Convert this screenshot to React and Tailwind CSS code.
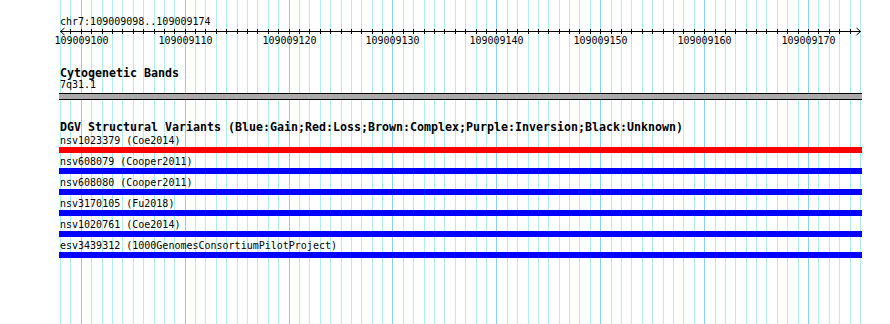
import React from 'react'

const START = 109009098
const END = 109009174
const BASES = END - START + 1
const SCALE = 800 / BASES
const xs = Array.from({ length: BASES + 1 }, (_, k) => Math.round(60 + k * SCALE))

const variants = [
  { id: 'nsv1023379', study: 'Coe2014', color: 'bg-[#ff0000]' },
  { id: 'nsv608079', study: 'Cooper2011', color: 'bg-[#0000ff]' },
  { id: 'nsv608080', study: 'Cooper2011', color: 'bg-[#0000ff]' },
  { id: 'nsv3170105', study: 'Fu2018', color: 'bg-[#0000ff]' },
  { id: 'nsv1020761', study: 'Coe2014', color: 'bg-[#0000ff]' },
  { id: 'esv3439312', study: '1000GenomesConsortiumPilotProject', color: 'bg-[#0000ff]' },
]

const isMajor = (k) => (START + k) % 10 === 0

const Grid = () => (
  <svg className="absolute inset-0 pointer-events-none" width="890" height="324" shapeRendering="crispEdges">
    {xs.map((x, k) => (
      <rect key={k} x={x} y="0" width="1" height="324" fill={isMajor(k) ? '#87cefa' : '#afeeee'} />
    ))}
  </svg>
)

const Ruler = () => (
  <svg className="block" width="890" height="50">
    <text x="60" y="25" fontSize="10" fill="#000">
      chr7:{START}..{END}
    </text>
    <rect x="60" y="31" width="801" height="1" fill="#000" shapeRendering="crispEdges" />
    {xs.slice(1, -1).map((x, i) => (
      <rect key={i} x={x} y="29" width="1" height="5" fill="#000" shapeRendering="crispEdges" />
    ))}
    <polyline points="64.5,28 60.5,31.5 64.5,35" fill="none" stroke="#000" strokeWidth="1" />
    <polyline points="856.5,28 860.5,31.5 856.5,35" fill="none" stroke="#000" strokeWidth="1" />
    {xs.map((x, k) =>
      isMajor(k) ? (
        <text key={k} x={x + 0.5} y="43.5" fontSize="10" textAnchor="middle" fill="#000">
          {START + k}
        </text>
      ) : null
    )}
  </svg>
)

export default function App() {
  return (
    <div className="relative w-[890px] h-[324px] overflow-hidden bg-white text-black font-['DejaVu_Sans_Mono',monospace]">
      <Grid />
      <div className="relative">
        <Ruler />

        <div className="mt-[17px] ml-[60px] text-[11.63px] font-bold leading-[12px]">Cytogenetic Bands</div>
        <div className="ml-[60px] text-[10px] leading-[12px]">7q31.1</div>
        <div className="mt-[2px] ml-[59px] w-[803px] h-[7px] bg-[#aaaaaa] border-y border-black" />

        <div className="mt-[22px] ml-[60px] text-[11.63px] font-bold leading-[11px] whitespace-nowrap">
          DGV Structural Variants (Blue:Gain;Red:Loss;Brown:Complex;Purple:Inversion;Black:Unknown)
        </div>

        <div className="flex flex-col gap-[3px] mt-[2px]">
          {variants.map((v) => (
            <div key={v.id}>
              <div className="ml-[60px] text-[10px] leading-[12px] whitespace-nowrap">
                {v.id} ({v.study})
              </div>
              <div className={`ml-[59px] w-[803px] h-[6px] ${v.color}`} />
            </div>
          ))}
        </div>
      </div>
    </div>
  )
}
